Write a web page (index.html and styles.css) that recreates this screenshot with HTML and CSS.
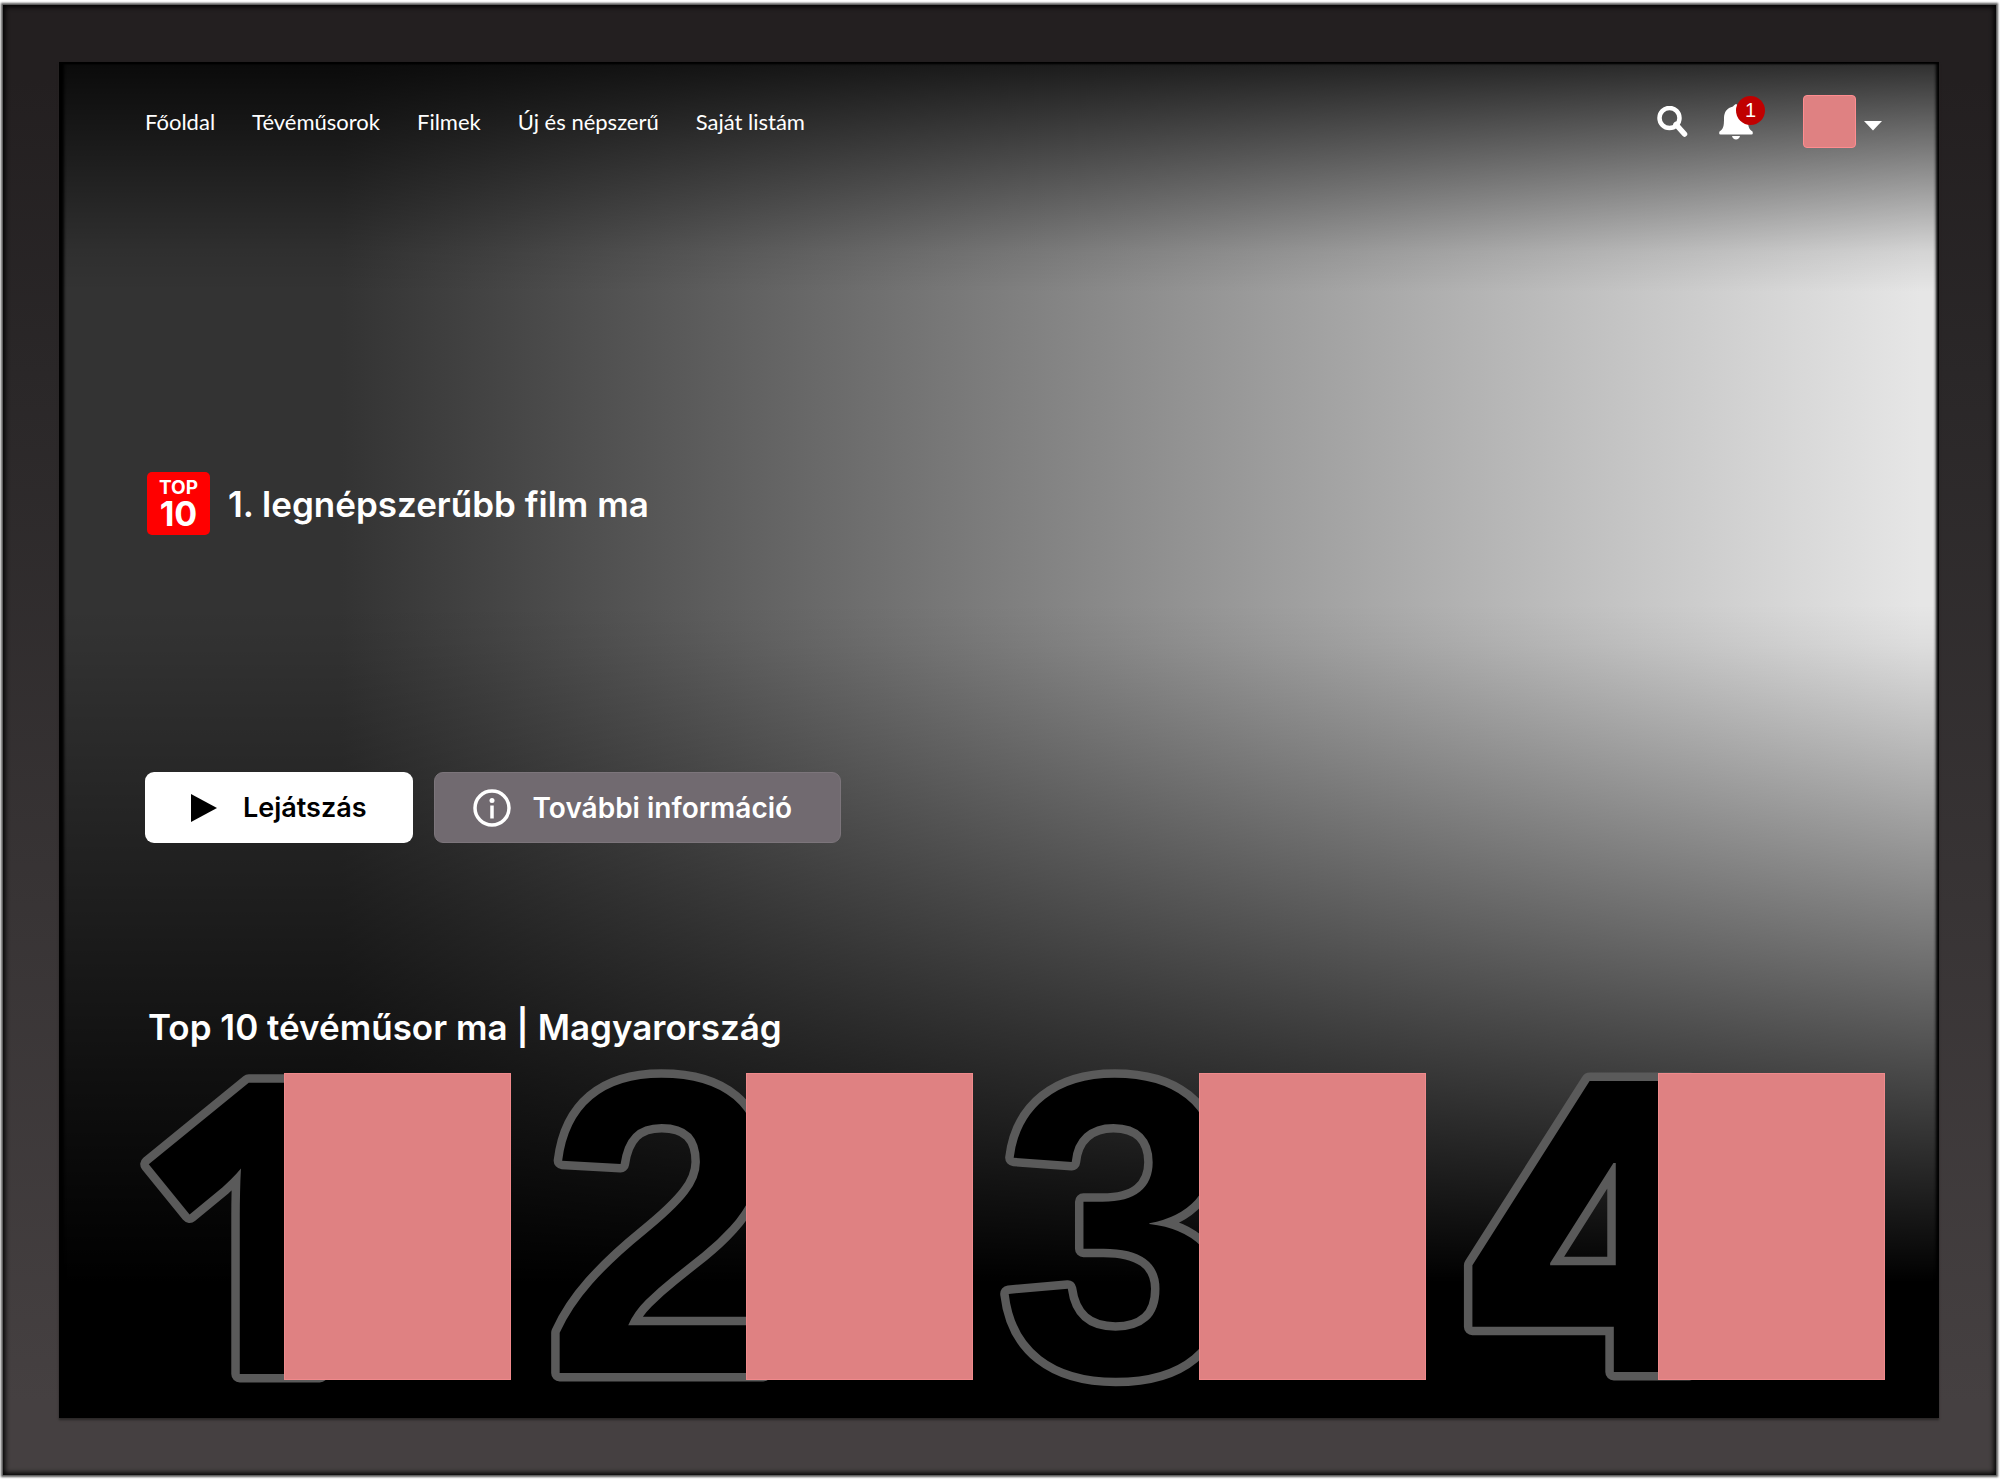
FILE: index.html
```html
<!DOCTYPE html>
<html lang="hu">
<head>
<meta charset="utf-8">
<meta name="viewport" content="width=device-width, initial-scale=1">
<title>Főoldal</title>
<link rel="stylesheet" href="styles.css">
</head>
<body>
<div class="bezel">
  <div class="screen">
    <header class="topbar">
      <nav class="menu">
        <a href="#">Főoldal</a>
        <a href="#">Tévéműsorok</a>
        <a href="#">Filmek</a>
        <a href="#">Új és népszerű</a>
        <a href="#">Saját listám</a>
      </nav>
      <div class="tools">
        <button class="icon-button" aria-label="Keresés">
          <svg width="32" height="32" viewBox="0 0 32 32"><circle cx="12.500" cy="12" r="10" fill="none" stroke="#fff" stroke-width="4.500"/><path d="M19 18.500L27.500 28" stroke="#fff" stroke-width="5.500" stroke-linecap="round"/></svg>
        </button>
        <button class="icon-button bell" aria-label="Értesítések">
          <svg width="34" height="36" viewBox="0 0 34 36"><path fill="#fff" d="M17 0c-2 1-2.500 2-3 2.500C8 4 5 8 5 14c0 8-.5 11-4.500 13.500Q-.5 30.500 1.500 30.500h31q2 0 1-3C29.500 25 29 22 29 14c0-6-3-10-9-11.500C19.500 2 19 1 17 0zM13 32h8c-.5 2-2 3.500-4 3.500s-3.500-1.500-4-3.500z"/></svg>
          <span class="count">1</span>
        </button>
        <button class="profile" aria-label="Profil">
          <span class="avatar"></span>
          <svg width="18" height="10" viewBox="0 0 18 10"><path fill="#fff" d="M0 0h18L9 9.500z"/></svg>
        </button>
      </div>
    </header>
    <main>
      <section class="hero">
        <div class="ranking">
          <div class="top-badge"><span>TOP</span><strong>10</strong></div>
          <h1>1. legnépszerűbb film ma</h1>
        </div>
        <div class="actions">
          <button class="action play">
            <svg width="26" height="28" viewBox="0 0 26 28"><path d="M0 0l26 14L0 28z"/></svg>
            Lejátszás
          </button>
          <button class="action info">
            <svg width="38" height="38" viewBox="0 0 38 38"><circle cx="19" cy="19" r="17" fill="none" stroke="#fff" stroke-width="3.500"/><circle cx="19" cy="11.500" r="2.500" fill="#fff"/><path d="M19 16.500v13" stroke="#fff" stroke-width="3.500"/></svg>
            További információ
          </button>
        </div>
      </section>
      <section>
        <h2>Top 10 tévéműsor ma | Magyarország</h2>
        <ol class="chart">
          <li><svg class="rank first"><text x="-13" y="301">1</text></svg><a href="#" class="poster" aria-label="1. helyezett"></a></li>
          <li><svg class="rank second"><text x="0" y="300">2</text></svg><a href="#" class="poster" aria-label="2. helyezett"></a></li>
          <li><svg class="rank third"><text x="-8" y="300">3</text></svg><a href="#" class="poster" aria-label="3. helyezett"></a></li>
          <li><svg class="rank fourth"><text x="-4" y="299">4</text></svg><a href="#" class="poster" aria-label="4. helyezett"></a></li>
        </ol>
      </section>
    </main>
  </div>
</div>
</body>
</html>
```
FILE: styles.css
```css
* { box-sizing: border-box; }

body {
  margin: 0;
  padding: 5px 4px 5px 3px;
  background: #fff;
  color: #fff;
  font-family: Inter, "Liberation Sans", sans-serif;
}

h1, h2, ol { margin: 0; padding: 0; }

button {
  padding: 0;
  border: 0;
  background: none;
  font: inherit;
  color: inherit;
}

.bezel {
  display: flex;
  flex-direction: column;
  min-height: calc(100vh - 10px);
  padding: 57px 57px 57px 56px;
  background: linear-gradient(#231f20 5%, #2a2728 25%, #454041 95%);
  box-shadow: inset 0 0 5px 2px #000, 0 0 2px 2px #555;
}

.screen {
  flex: 1;
  padding: 33px 54px 38px 86px;
  background:
    linear-gradient(rgba(0, 0, 0, 0.8), rgba(0, 0, 0, 0.08) 14%, rgba(0, 0, 0, 0) 17%),
    linear-gradient(rgba(0, 0, 0, 0) 40%, rgba(0, 0, 0, 0.04) 43%, #000 90%),
    linear-gradient(90deg, #333 15%, #e6e6e6 99%);
  box-shadow: inset 5px 0 3px #000, inset -3px 0 3px #000, inset 0 2px 2px #000, 0 2px 2px #2a2727;
}

.topbar {
  display: flex;
  justify-content: space-between;
  align-items: center;
}

.menu {
  display: flex;
  gap: 37px;
  font: 22px/28px Lato, "Noto Sans", sans-serif;
}

.menu a { color: #fff; text-decoration: none; }

.tools { display: flex; align-items: center; gap: 30px; }

.icon-button { position: relative; display: flex; }

.count {
  position: absolute;
  top: -8px;
  right: -12px;
  width: 29px;
  height: 29px;
  border-radius: 50%;
  background: #c00000;
  font: 20px/29px "Liberation Sans", sans-serif;
  text-align: center;
}

.profile {
  display: flex;
  align-items: center;
  gap: 8px;
  margin: 0 3px 0 20px;
}

.profile svg { margin-top: 8px; }

.avatar {
  width: 53px;
  height: 53px;
  border: 1px solid #ff8d90;
  border-radius: 4px;
  background: #df8182;
}

.ranking {
  display: flex;
  align-items: center;
  gap: 18px;
  margin: 324px 0 0 2px;
}

.top-badge {
  display: flex;
  flex-direction: column;
  align-items: center;
  width: 63px;
  height: 63px;
  padding-top: 6px;
  border-radius: 5px;
  background: #f00;
  font-weight: 700;
  font-size: 19px;
  line-height: 20px;
}

.top-badge strong { font-size: 34px; font-weight: 700; line-height: 32px; }

h1, h2 { font-size: 35px; font-weight: 600; line-height: 48px; }

.actions { display: flex; gap: 21px; margin-top: 237px; }

.action {
  display: flex;
  align-items: center;
  height: 71px;
  border-radius: 9px;
  font-size: 28px;
  font-weight: 600;
}

.play {
  gap: 26px;
  padding: 0 46px;
  background: #fff;
  color: #000;
  font-size: 27px;
}

.info {
  gap: 22px;
  padding: 0 48px 0 38px;
  border: 1px solid #7c757b;
  background: #716a70;
}

h2 { margin: 160px 0 22px 3px; }

.chart {
  display: flex;
  justify-content: space-between;
  list-style: none;
}

.chart li { display: flex; }

/* The numeral runs on underneath the poster beside it. */
.rank {
  height: 307px;
  overflow: visible;
  font: 700 423px "Liberation Sans", Arial, sans-serif;
  fill: #000;
  stroke: #5a5a5a;
  stroke-width: 17px;
  stroke-linejoin: round;
  paint-order: stroke fill;
}

.first { width: 139px; font: 800 408px "Open Sans", sans-serif; }
.second { width: 201px; }
.third { width: 192px; }
.fourth { width: 198px; font: 900 400px Inter, sans-serif; }

.poster {
  position: relative;
  width: 227px;
  height: 307px;
  border: 1px solid #f08a8c;
  background: #df8182;
}
```
